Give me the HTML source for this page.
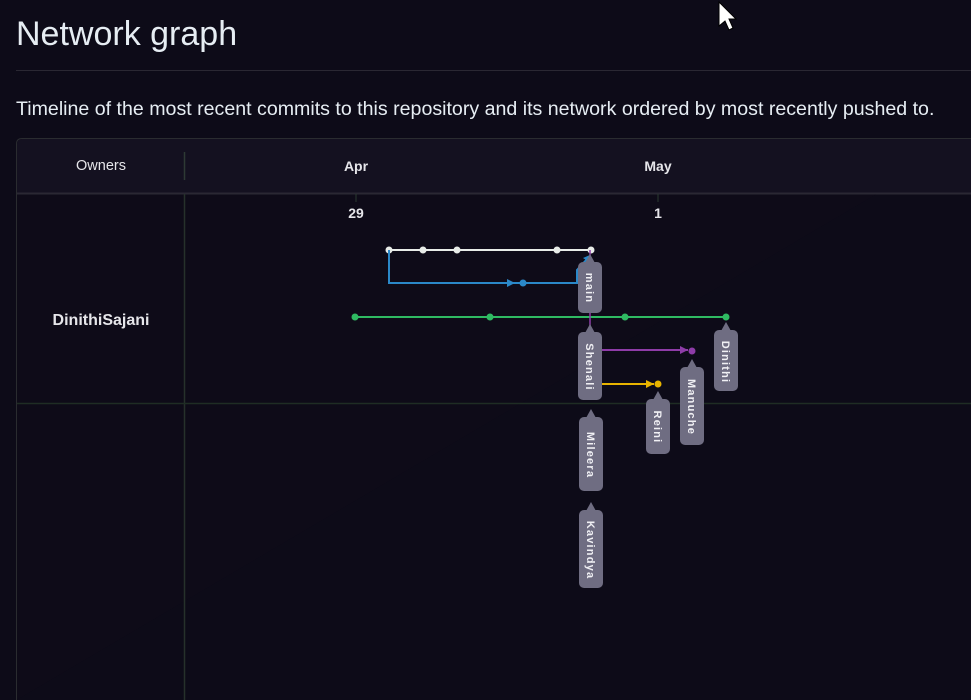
<!DOCTYPE html>
<html><head><meta charset="utf-8"><style>
html,body{margin:0;padding:0;background:#0d0b18;width:971px;height:700px;overflow:hidden;font-family:"Liberation Sans",sans-serif;color:#e6edf3}
h1{position:absolute;left:16px;top:15px;margin:0;font-weight:400;font-size:34px;color:#e6edf3;white-space:nowrap}
.hr{position:absolute;left:16px;top:70px;width:955px;height:1px;background:#2a2833}
p{position:absolute;left:16px;top:98px;margin:0;font-size:19.6px;color:#e6edf3;white-space:nowrap}
svg{display:block}
</style></head><body>
<h1>Network graph</h1>
<div class="hr"></div>
<p>Timeline of the most recent commits to this repository and its network ordered by most recently pushed to.</p>
<svg width="971" height="700" style="position:absolute;left:0;top:0;overflow:hidden" font-family="Liberation Sans, sans-serif">
<path d="M16.5 700 V144 Q16.5 138.5 22 138.5 H971" fill="#0e0b18" stroke="#2a2c30"/>
<path d="M17 193 V144 Q17 139 22 139 H971 V193 Z" fill="#141120"/>
<line x1="17" y1="193.5" x2="971" y2="193.5" stroke="#2a2833" stroke-width="2"/>
<line x1="184.5" y1="152" x2="184.5" y2="180" stroke="#2e3a34" stroke-width="1.5"/>
<line x1="184.5" y1="194" x2="184.5" y2="700" stroke="#26312b" stroke-width="1.5"/>
<line x1="17" y1="403.5" x2="971" y2="403.5" stroke="#1f2d24" stroke-width="1.5"/>
<line x1="356" y1="194" x2="356" y2="202" stroke="#2a3a30"/>
<line x1="658" y1="194" x2="658" y2="202" stroke="#2a3a30"/>
<g fill="#e6e6ea" font-weight="bold" font-size="14" text-anchor="middle">
<text x="101" y="170" font-weight="normal" font-size="14.5">Owners</text>
<text x="356" y="171">Apr</text>
<text x="658" y="171">May</text>
<text x="356" y="218">29</text>
<text x="658" y="218">1</text>
<text x="101" y="325" font-size="16">DinithiSajani</text>
</g>
<line x1="389" y1="250" x2="591" y2="250" stroke="#e8ece8" stroke-width="2"/>
<g fill="#e8ece8"><circle cx="389" cy="250" r="3.5"/><circle cx="423" cy="250" r="3.5"/><circle cx="457" cy="250" r="3.5"/><circle cx="557" cy="250" r="3.5"/><circle cx="591" cy="250" r="3.5"/></g>
<path d="M389 250 V283 H577 V270 L588 258" fill="none" stroke="#2b88c8" stroke-width="2"/>
<path d="M507 279 L515 283 L507 287 Z" fill="#2b88c8"/>
<path d="M583 258 L590 255 L589 262 Z" fill="#2b88c8"/>
<circle cx="523" cy="283" r="3.5" fill="#2b88c8"/>
<line x1="355" y1="317" x2="726" y2="317" stroke="#2fba62" stroke-width="2"/>
<g fill="#2fba62"><circle cx="355" cy="317" r="3.5"/><circle cx="490" cy="317" r="3.5"/><circle cx="625" cy="317" r="3.5"/><circle cx="726" cy="317" r="3.5"/></g>
<line x1="600" y1="350" x2="688" y2="350" stroke="#8e3ca8" stroke-width="2"/>
<path d="M680 346 L688 350 L680 354 Z" fill="#8e3ca8"/><circle cx="692" cy="351" r="3.5" fill="#8e3ca8"/>
<line x1="600" y1="384" x2="654" y2="384" stroke="#e8b400" stroke-width="2"/>
<path d="M646 380 L654 384 L646 388 Z" fill="#e8b400"/><circle cx="658" cy="384" r="3.5" fill="#e8b400"/>
<line x1="590" y1="250" x2="590" y2="330" stroke="#8e3ca8" stroke-width="1.5"/>
<g fill="#6f6d82">
<path d="M590 254 L595 263 H585 Z"/><rect x="578" y="262" width="24" height="51" rx="5"/>
<path d="M590 324 L595 333 H585 Z"/><rect x="578" y="332" width="24" height="68" rx="5"/>
<path d="M591 409 L596 418 H586 Z"/><rect x="579" y="417" width="24" height="74" rx="5"/>
<path d="M591 502 L596 511 H586 Z"/><rect x="579" y="510" width="24" height="78" rx="5"/>
<path d="M658 391 L663 400 H653 Z"/><rect x="646" y="399" width="24" height="55" rx="5"/>
<path d="M692 359 L697 368 H687 Z"/><rect x="680" y="367" width="24" height="78" rx="5"/>
<path d="M726 322 L731 331 H721 Z"/><rect x="714" y="330" width="24" height="61" rx="5"/>
</g>
<g fill="#f0f0f4" font-weight="bold" font-size="11" text-anchor="middle" letter-spacing="1.2">
<text transform="translate(586 288) rotate(90)">main</text>
<text transform="translate(586 367) rotate(90)">Shenali</text>
<text transform="translate(587 455) rotate(90)">Mileera</text>
<text transform="translate(587 550) rotate(90)">Kavindya</text>
<text transform="translate(654 427) rotate(90)">Reini</text>
<text transform="translate(688 407) rotate(90)">Manuche</text>
<text transform="translate(722 362) rotate(90)">Dinithi</text>
</g>
<path d="M719 2 V26 L725 21 L729 30 L733 28 L729 19 L736 19 Z" fill="#fff" stroke="#000" stroke-width="1"/>
</svg>
</body></html>
